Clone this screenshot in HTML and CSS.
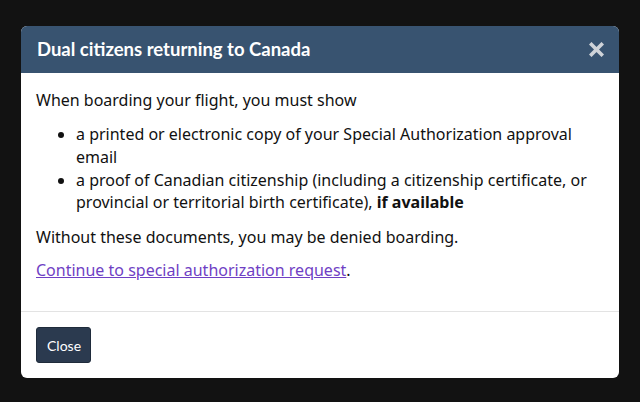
FILE: index.html
```html
<!DOCTYPE html>
<html lang="en">
<head>
<meta charset="utf-8">
<title>Dual citizens returning to Canada</title>
<link rel="stylesheet" href="styles.css">
</head>
<body>
<div class="backdrop">
  <div class="dialog" role="dialog">
    <div class="dialog-header">
      <h2 class="dialog-title">Dual citizens returning to Canada</h2>
      <button class="close-x" type="button" aria-label="Close">
        <svg width="15" height="15" viewBox="0 0 15 15"><path d="M2.5 2.5 L12.5 12.5 M12.5 2.5 L2.5 12.5" stroke="#cfd3d8" stroke-width="3.6" stroke-linecap="square"/></svg>
      </button>
    </div>
    <div class="dialog-body">
      <p>When boarding your flight, you must show</p>
      <ul>
        <li>a printed or electronic copy of your Special Authorization approval email</li>
        <li>a proof of Canadian citizenship (including a citizenship certificate, or provincial or territorial birth certificate), <strong>if available</strong></li>
      </ul>
      <p>Without these documents, you may be denied boarding.</p>
      <p><a class="link" href="#">Continue to special authorization request</a>.</p>
    </div>
    <div class="dialog-footer">
      <button class="btn" type="button">Close</button>
    </div>
  </div>
</div>
</body>
</html>
```
FILE: styles.css
```css
html, body {
  margin: 0;
  padding: 0;
  background: #121212;
}
.backdrop {
  padding: 26px 21px 0 21px;
}
.dialog {
  width: 598px;
  background: #ffffff;
  border-radius: 6px;
  overflow: hidden;
}
.dialog-header {
  background: #385370;
  height: 47px;
  display: flex;
  align-items: center;
  justify-content: space-between;
  padding: 0 15px 0 16px;
  box-sizing: border-box;
}
.dialog-title {
  margin: 0;
  font-family: Lato, "Liberation Sans", sans-serif;
  font-weight: 700;
  font-size: 18.5px;
  color: #ffffff;
  line-height: 1;
}
.close-x {
  background: none;
  border: 0;
  padding: 0;
  margin: 0;
  width: 15px;
  height: 15px;
  display: flex;
}
.dialog-body {
  padding: 16px 15px 19px 15px;
  font-family: "Noto Sans", "Open Sans", sans-serif;
  font-size: 16px;
  line-height: 22.86px;
  color: #111111;
}
.dialog-body p {
  margin: 0 0 10px 0;
}
.dialog-body ul {
  margin: 11px 0 12px 0;
  padding-left: 40px;
}
.link {
  color: #6f3fc4;
  text-decoration: underline;
}
.dialog-footer {
  border-top: 1px solid #e3e3e3;
  padding: 15px;
  display: flex;
}
.btn {
  font-family: Lato, "Liberation Sans", sans-serif;
  font-size: 14px;
  color: #ffffff;
  background: #2b3a4f;
  border: 1px solid #1f2b3b;
  border-radius: 3px;
  height: 36px;
  padding: 0 10px;
  box-sizing: border-box;
  width: 55px;
}
```
